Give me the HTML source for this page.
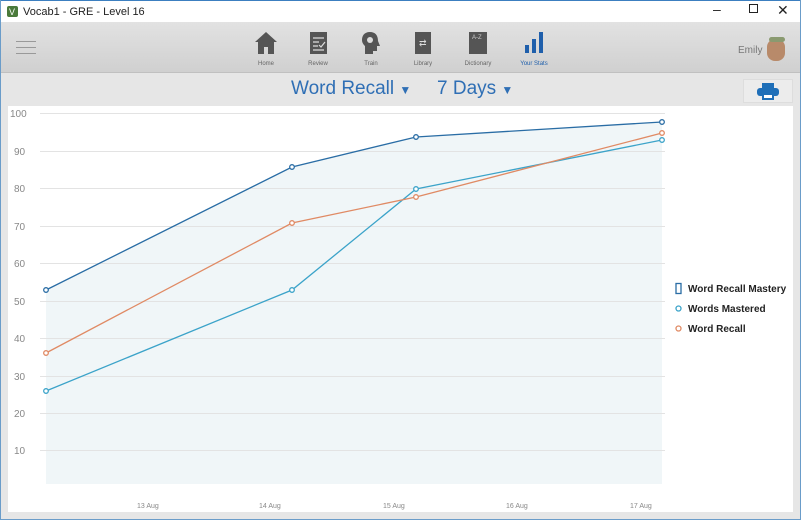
<!DOCTYPE html>
<html><head><meta charset="utf-8"><style>
*{margin:0;padding:0;box-sizing:border-box}
body{width:801px;height:520px;overflow:hidden;font-family:"Liberation Sans",sans-serif;background:#e6e6e6;position:relative}
.title{position:absolute;left:0;top:0;width:801px;height:22px;background:#fff;border:1px solid #3c7fc0;border-bottom:none}
.title span{position:absolute;left:22px;top:5px;font-size:11px;color:#222}
.nav{position:absolute;left:1px;top:22px;width:799px;height:51px;background:linear-gradient(#e2e2e2,#d0d0d0);border-bottom:1px solid #c0c0c0}
.lbl{position:absolute;top:39px;font-size:6px;color:#666;text-align:center;width:40px}
.bar2{position:absolute;left:1px;top:74px;width:799px;height:32px;background:#e6e6e6}
.chart{position:absolute;left:8px;top:106px;width:785px;height:406px;background:#fff}
.side{position:absolute;top:0;width:1px;height:520px;background:#6a9cc9}
</style></head><body>
<div class="title"><svg style="position:absolute;left:6px;top:5px" width="11" height="11"><rect width="11" height="11" rx="2" fill="#4a7a3a"/><text x="2" y="9" font-size="9" fill="#fff" font-family="Liberation Sans">V</text></svg><span>Vocab1 - GRE - Level 16</span>
<span style="left:712px;top:0;font-size:14px">–</span>
<span style="left:748px;top:3px;width:9px;height:9px;border:1px solid #222"></span>
<span style="left:776px;top:1px;font-size:14px">✕</span></div>
<div class="nav">
<div style="position:absolute;left:15px;top:19px;width:20px;height:1px;background:#999;box-shadow:0 6px 0 #999,0 12px 0 #999"></div>
<svg style="position:absolute;left:253px;top:9px" width="24" height="24"><path d="M12 1 L1 11 H4 V23 H10 V16 H14 V23 H20 V11 H23Z" fill="#555"/></svg>
<div style="position:absolute;left:309px;top:10px;width:17px;height:22px;background:#555"></div><svg style="position:absolute;left:309px;top:10px" width="17" height="22"><path d="M3 6H14M3 10H9M3 14H8M3 18H14M9 13l2 2 4-5" stroke="#ddd" stroke-width="1.2" fill="none"/></svg>
<svg style="position:absolute;left:360px;top:9px" width="20" height="24"><path d="M9 1C3 1 1 5 1 9c0 3 2 5 3 6v8h8v-3h4v-5h3l-2-5C17 4 14 1 9 1Z" fill="#555"/><circle cx="9" cy="9" r="3" fill="#ddd"/></svg>
<div style="position:absolute;left:414px;top:10px;width:16px;height:22px;background:#555"></div><div style="position:absolute;left:418px;top:16px;color:#ddd;font-size:9px">⇄</div>
<div style="position:absolute;left:468px;top:10px;width:18px;height:22px;background:#555"></div><div style="position:absolute;left:471px;top:13px;color:#ccc;font-size:6px">A-Z</div>
<svg style="position:absolute;left:523px;top:8px" width="22" height="24"><rect x="1" y="15" width="4" height="8" fill="#1f5fab"/><rect x="8" y="9" width="4" height="14" fill="#1f5fab"/><rect x="15" y="2" width="4" height="21" fill="#1f5fab"/></svg>
<div class="lbl" style="left:245px">Home</div><div class="lbl" style="left:297px">Review</div><div class="lbl" style="left:350px">Train</div><div class="lbl" style="left:402px">Library</div><div class="lbl" style="left:457px">Dictionary</div><div class="lbl" style="left:513px;color:#1f5fab">Your Stats</div>
<div style="position:absolute;left:737px;top:23px;font-size:10px;color:#777">Emily</div>
<div style="position:absolute;left:766px;top:17px;width:18px;height:22px;border-radius:8px;background:#b88a6a"></div><div style="position:absolute;left:768px;top:15px;width:16px;height:5px;background:#8a9a70;border-radius:3px"></div>
</div>
<div class="bar2">
<div style="position:absolute;left:290px;top:4px;font-size:19px;color:#2f6fb5">Word Recall <span style="font-size:12px">▼</span></div>
<div style="position:absolute;left:436px;top:4px;font-size:19px;color:#2f6fb5">7 Days <span style="font-size:12px">▼</span></div>
<div style="position:absolute;left:742px;top:5px;width:50px;height:24px;background:#ececec;border:1px solid #ddd"></div>
<svg style="position:absolute;left:755px;top:8px" width="24" height="19"><rect x="6" y="1" width="12" height="5" fill="#1f6fb8"/><rect x="1" y="6" width="22" height="8" rx="3" fill="#1f6fb8"/><rect x="6" y="12" width="12" height="6" fill="#1f6fb8"/><rect x="8" y="13" width="8" height="3" fill="#fff"/></svg>
</div>
<div class="chart"></div>
<svg style="position:absolute;left:0;top:0" width="801" height="520" font-family="Liberation Sans">
<polygon points="46,290 292,167 416,137 662,122 662,484 46,484" fill="#f0f6f8"/>
<g stroke="#e3e3e3" stroke-width="1">
<line x1="40" y1="113.5" x2="665" y2="113.5"/><line x1="40" y1="151.5" x2="665" y2="151.5"/><line x1="40" y1="188.5" x2="665" y2="188.5"/><line x1="40" y1="226.5" x2="665" y2="226.5"/><line x1="40" y1="263.5" x2="665" y2="263.5"/><line x1="40" y1="301.5" x2="665" y2="301.5"/><line x1="40" y1="338.5" x2="665" y2="338.5"/><line x1="40" y1="376.5" x2="665" y2="376.5"/><line x1="40" y1="413.5" x2="665" y2="413.5"/><line x1="40" y1="450.5" x2="665" y2="450.5"/></g>
<g font-size="10" fill="#888"><text x="10" y="117">100</text><text x="14" y="155">90</text><text x="14" y="192">80</text><text x="14" y="230">70</text><text x="14" y="267">60</text><text x="14" y="305">50</text><text x="14" y="342">40</text><text x="14" y="380">30</text><text x="14" y="417">20</text><text x="14" y="454">10</text></g>
<g font-size="7" fill="#888"><text x="137" y="508">13 Aug</text><text x="259" y="508">14 Aug</text><text x="383" y="508">15 Aug</text><text x="506" y="508">16 Aug</text><text x="630" y="508">17 Aug</text></g>
<g fill="#fff" stroke-width="1.3">
<polyline points="46,290 292,167 416,137 662,122" fill="none" stroke="#2a6da5"/>
<polyline points="46,391 292,290 416,189 662,140" fill="none" stroke="#3ba3c9"/>
<polyline points="46,353 292,223 416,197 662,133" fill="none" stroke="#e08a64"/>
<g stroke="#2a6da5"><circle cx="46" cy="290" r="2.3"/><circle cx="292" cy="167" r="2.3"/><circle cx="416" cy="137" r="2.3"/><circle cx="662" cy="122" r="2.3"/></g>
<g stroke="#3ba3c9"><circle cx="46" cy="391" r="2.3"/><circle cx="292" cy="290" r="2.3"/><circle cx="416" cy="189" r="2.3"/><circle cx="662" cy="140" r="2.3"/></g>
<g stroke="#e08a64"><circle cx="46" cy="353" r="2.3"/><circle cx="292" cy="223" r="2.3"/><circle cx="416" cy="197" r="2.3"/><circle cx="662" cy="133" r="2.3"/></g>
<rect x="676" y="283.5" width="5" height="10" fill="#fff" stroke="#2a6da5"/>
<circle cx="678.5" cy="308.5" r="2.5" stroke="#3ba3c9"/>
<circle cx="678.5" cy="328.5" r="2.5" stroke="#e08a64"/></g>
<g font-size="10" font-weight="bold" fill="#222"><text x="688" y="292">Word Recall Mastery</text><text x="688" y="312">Words Mastered</text><text x="688" y="332">Word Recall</text></g>
</svg>
<div class="side" style="left:0"></div><div class="side" style="left:800px"></div>
<div style="position:absolute;left:0;top:519px;width:801px;height:1px;background:#6a9cc9"></div>
</body></html>
